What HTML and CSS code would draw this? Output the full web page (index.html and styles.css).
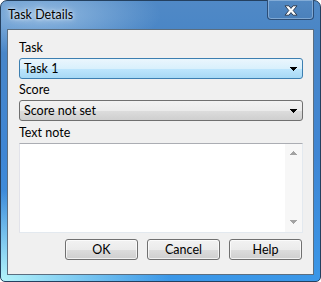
FILE: index.html
```html
<!DOCTYPE html>
<html lang="en">
<head>
  <meta charset="UTF-8" />
  <title>Task Details</title>
  <link rel="stylesheet" href="styles.css">
</head>
<body>

  <div class="window">
    <div class="titlebar">
      <span class="title">Task Details</span>
      <div class="close">
        <svg width="14" height="11" viewBox="0 0 14 11">
          <path d="M1 0.8h4l2 2.6 2-2.6h4l-3.8 4.7 3.8 4.7h-4l-2-2.6-2 2.6h-4l3.8-4.7z" fill="#fff" stroke="#2f3f55" stroke-width="1" stroke-linejoin="round"/>
        </svg>
      </div>
    </div>

    <div class="client">
      <label class="label label-task">Task</label>
      <div class="combo combo-focus">
        <span>Task 1</span>
        <svg class="arrow" width="7" height="5" viewBox="0 0 7 5"><path d="M0 0h7v1h-1v1h-1v1h-1v1h-1v-1h-1v-1h-1v-1h-1z" fill="#000"/></svg>
      </div>

      <label class="label label-score">Score</label>
      <div class="combo">
        <span>Score not set</span>
        <svg class="arrow" width="7" height="5" viewBox="0 0 7 5"><path d="M0 0h7v1h-1v1h-1v1h-1v1h-1v-1h-1v-1h-1v-1h-1z" fill="#000"/></svg>
      </div>

      <label class="label label-note">Text note</label>
      <div class="note">
        <div class="note-text"></div>
        <div class="scrollbar">
          <svg width="7" height="4" viewBox="0 0 7 4"><path d="M3 0h1v1h1v1h1v1h1v1h-7v-1h1v-1h1v-1h1z" fill="#a3a3a3"/></svg>
          <svg width="7" height="4" viewBox="0 0 7 4"><path d="M0 0h7v1h-1v1h-1v1h-1v1h-1v-1h-1v-1h-1v-1h-1z" fill="#a3a3a3"/></svg>
        </div>
      </div>

      <div class="buttons">
        <button class="btn">OK</button>
        <button class="btn">Cancel</button>
        <button class="btn">Help</button>
      </div>
    </div>
  </div>

</body>
</html>
```

FILE: styles.css
```css
body {
  margin: 0;
  background-color: #fff;
  font-family: Lato, "Noto Sans", sans-serif;
  font-size: 12.5px;
  color: #000;
}
.window {
  box-sizing: border-box;
  width: 321px;
  height: 282px;
  padding: 0 6px 6px 6px;
  border: 1px solid #24405f;
  border-radius: 7px 7px 5px 5px;
  display: flex;
  flex-direction: column;
  background:
    radial-gradient(ellipse 120px 40px at 40px 14px, rgba(200, 225, 245, 0.55), rgba(200, 225, 245, 0)),
    radial-gradient(ellipse 170px 90px at 0 100%, #b4f4fa, rgba(150, 235, 248, 0)),
    linear-gradient(to bottom, #5089c6 0, #4a86c6 30px, #3f86d4 55%, #3a97e8 100%);
}
.titlebar {
  height: 28px;
  display: flex;
  align-items: flex-start;
}
.title {
  margin-top: 6px;
  padding-left: 1px;
  line-height: 15px;
  text-shadow: 0 0 6px rgba(255, 255, 255, 0.9), 0 0 3px rgba(255, 255, 255, 0.8);
}
.close {
  box-sizing: border-box;
  margin-left: auto;
  margin-top: -1px;
  width: 47px;
  height: 20px;
  border: 1px solid rgba(20, 40, 70, 0.6);
  border-top: none;
  border-radius: 0 0 4px 4px;
  box-shadow: inset 0 0 0 1px rgba(190, 215, 240, 0.45);
  background: linear-gradient(to bottom, #5389c2, #4a80bb);
  display: flex;
  align-items: center;
  justify-content: center;
}
.close svg {
  display: block;
  margin-top: 1px;
}
.client {
  flex: 1;
  display: flex;
  flex-direction: column;
  padding: 0 10px 0 11px;
  background-color: #f0f0f0;
  border: 1px solid #5b6e80;
}
.label {
  display: block;
  line-height: 15px;
  margin-bottom: 3px;
}
.label-task {
  margin-top: 10px;
}
.label-score {
  margin-top: 3px;
}
.label-note {
  margin-top: 4px;
}
.combo {
  box-sizing: border-box;
  height: 21px;
  padding: 0 5px 0 4px;
  border: 1px solid #707070;
  border-radius: 3px;
  display: flex;
  align-items: center;
  background: linear-gradient(to bottom, #f2f2f2 0, #ebebeb 50%, #dddddd 50%, #cfcfcf 100%);
}
.combo span {
  flex: 1;
  line-height: 19px;
}
.combo-focus {
  border-color: #3c7fb1;
  background: linear-gradient(to bottom, #eaf6fd 0, #d9f0fc 50%, #bee6fd 50%, #a7d9f5 100%);
}
.arrow {
  display: block;
  margin-top: 1px;
}
.note {
  box-sizing: border-box;
  height: 90px;
  display: flex;
  background-color: #fff;
  border: 1px solid #e3e9ef;
  border-top-color: #abadb3;
  border-left-color: #e2e3ea;
}
.note-text {
  flex: 1;
}
.scrollbar {
  width: 17px;
  display: flex;
  flex-direction: column;
  justify-content: space-between;
  align-items: center;
  padding: 7px 0 8px;
  background-color: #f7f7f7;
  box-sizing: border-box;
}
.scrollbar svg {
  display: block;
}
.buttons {
  margin-top: 6px;
  padding-right: 1px;
  display: flex;
  justify-content: flex-end;
  gap: 9px;
}
.btn {
  box-sizing: border-box;
  width: 73px;
  height: 21px;
  padding: 0;
  font-family: inherit;
  font-size: 12.5px;
  color: #000;
  border: 1px solid #707070;
  border-radius: 3px;
  background: linear-gradient(to bottom, #f2f2f2 0, #ebebeb 50%, #dddddd 50%, #cfcfcf 100%);
  box-shadow: inset 0 0 0 1px rgba(255, 255, 255, 0.7);
}
```
